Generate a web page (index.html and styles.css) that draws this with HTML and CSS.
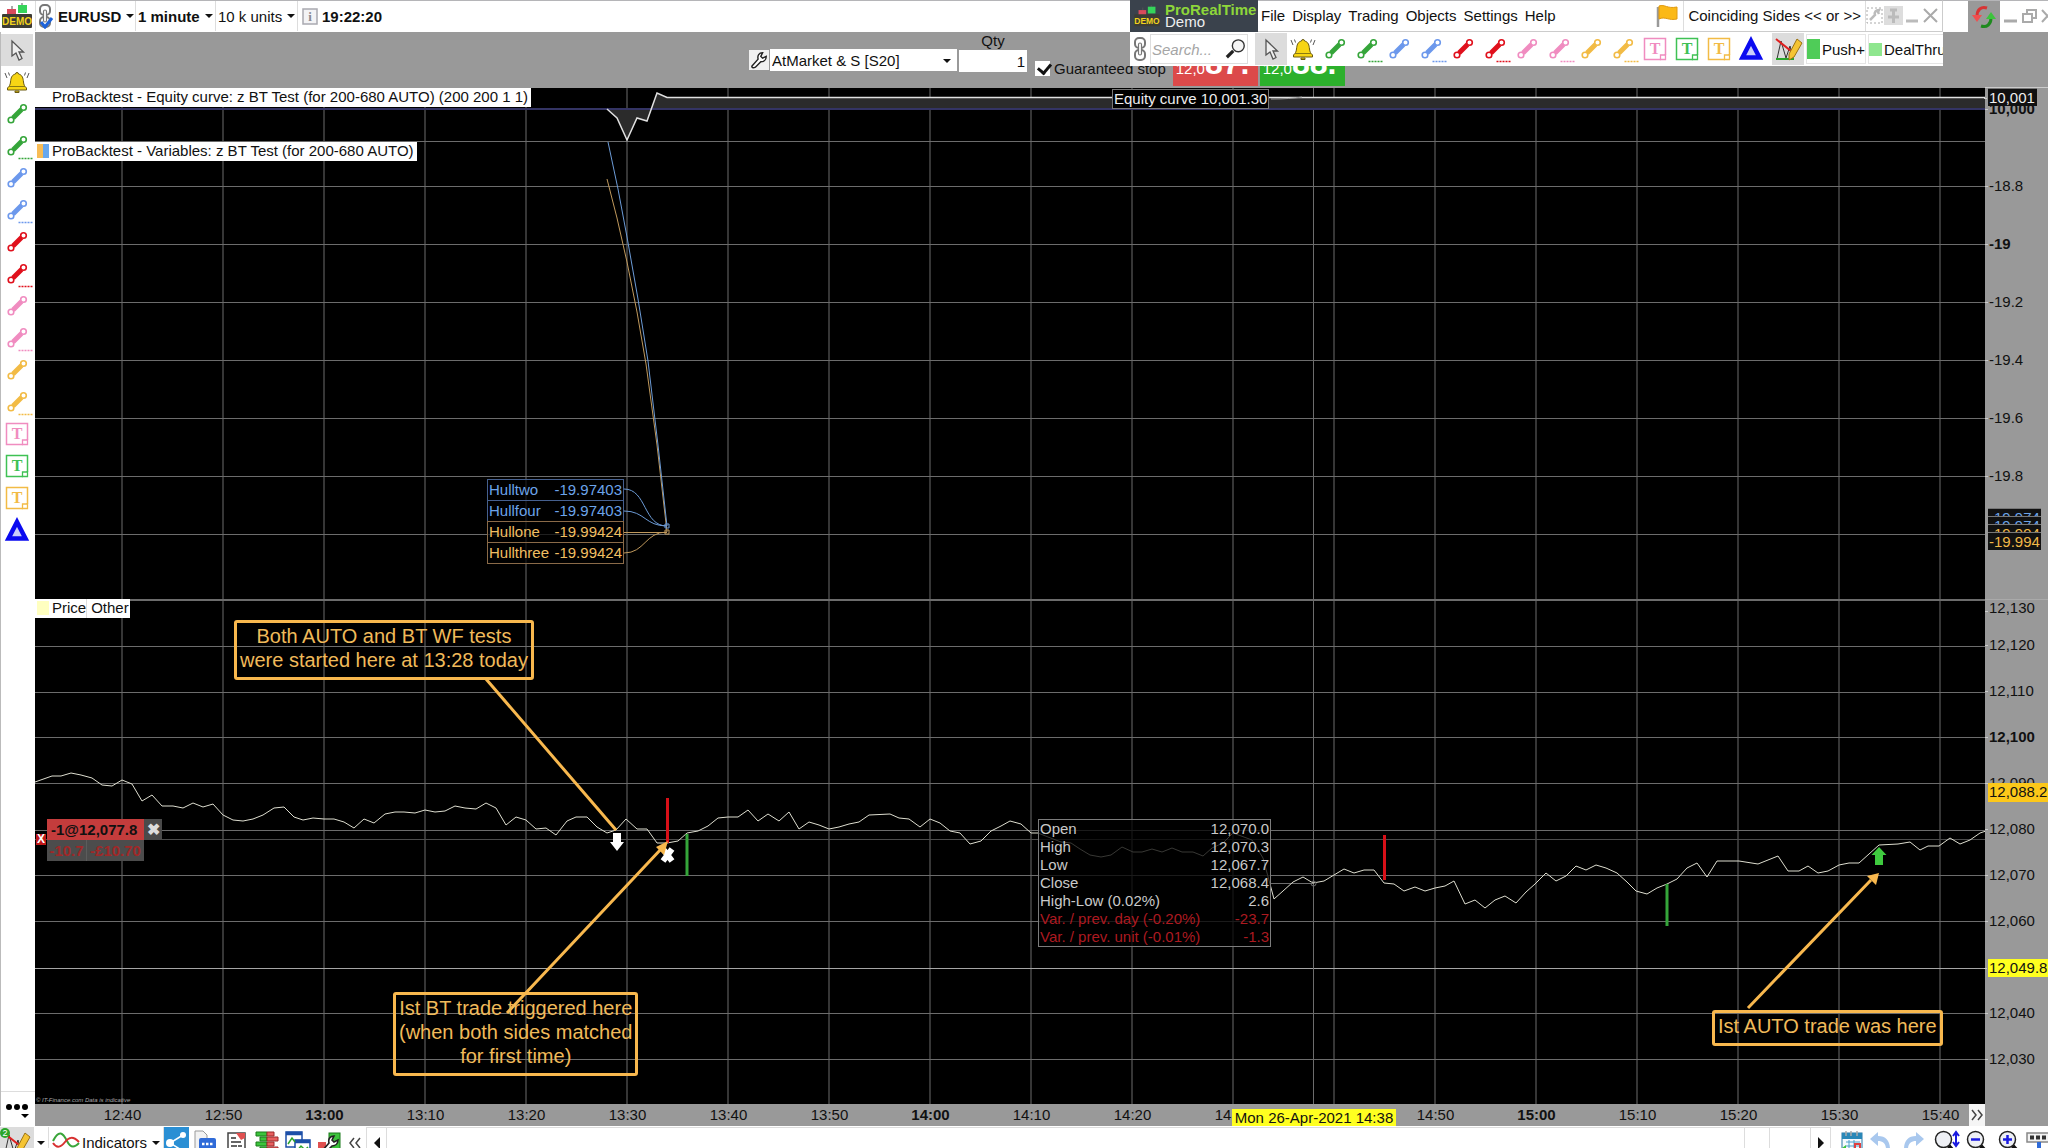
FILE: index.html
```html
<!DOCTYPE html>
<html lang="en">
<head>
    <meta charset="UTF-8">
    <meta name="viewport" content="width=device-width, initial-scale=1.0">
    <title>EURUSD - 1 minute</title>
    <link rel="stylesheet" href="styles.css">
</head>
<body>
    <!-- Icon sprite -->
    <svg class="sprite">
        <symbol id="i-demo" viewBox="0 0 30 26">
            <path d="M7 11v-5M10 3v4M20 0v3" stroke="#555" fill="none"/>
            <rect x="5" y="6" width="9" height="6" fill="#d84a5c"/>
            <rect x="16" y="2" width="9" height="8" fill="#35d45a"/>
            <rect x="0" y="11" width="30" height="14" rx="1" fill="#3c3c34"/>
            <text x="15" y="22" text-anchor="middle" class="demo-text">DEMO</text>
        </symbol>
        <symbol id="i-chain" viewBox="0 0 14 26">
            <g fill="none" stroke="#777" stroke-width="2">
                <rect x="2" y="2" width="10" height="10" rx="4"/>
                <rect x="2" y="14" width="10" height="10" rx="4"/>
            </g>
            <rect x="5.500" y="7" width="3" height="12" rx="1.500" fill="#fff" stroke="#777" stroke-width="1.200"/>
        </symbol>
        <symbol id="i-pointer" viewBox="0 0 32 32">
            <path d="M11 7v15l4-3 3 7 3-1.500-3-6.500h4.500z" fill="#eee" stroke="#555" stroke-width="1.300"/>
        </symbol>
        <symbol id="i-bell" viewBox="0 0 32 32">
            <path d="M14.500 8a1.500 1.500 0 0 1 3 0c4 1 4.500 4 5 8 .3 3 1 4 3 6v2h-19v-2c2-2 2.700-3 3-6 .5-4 1-7 5-8z" fill="#f7d514" stroke="#6a5a10"/>
            <path d="M8 20.500h16" stroke="#8a7a10"/>
            <path d="M14 25h4v1.500h-4z" fill="#f7d514" stroke="#6a5a10"/>
            <path d="M4 7l2 5M7.500 6.500l1 3M28 7l-2 5M24.500 6.500l-1 3" stroke="#555" fill="none"/>
        </symbol>
        <symbol id="i-line" viewBox="0 0 32 32">
            <path d="M12 20L20.500 11.500" stroke="currentColor" stroke-width="5"/>
            <circle cx="10" cy="22" r="2.800" fill="#fff" stroke="currentColor" stroke-width="1.600"/>
            <circle cx="22.500" cy="9.500" r="2.800" fill="#fff" stroke="currentColor" stroke-width="1.600"/>
        </symbol>
        <symbol id="i-line-dots" viewBox="0 0 32 32">
            <use href="#i-line"/>
            <path d="M17.500 28.500h14" stroke="currentColor" stroke-width="1.500" stroke-dasharray="2 1"/>
        </symbol>
        <symbol id="i-note" viewBox="0 0 32 32">
            <path d="M5.500 5.500h21v16l-5 5h-16z" fill="#fff" stroke="currentColor" stroke-width="1.500"/>
            <path d="M21.500 26.500v-4.500h5v4.500z" fill="#fff" stroke="currentColor" stroke-width="1.300"/>
            <text x="16" y="21" text-anchor="middle" class="note-text">T</text>
        </symbol>
        <symbol id="i-triangle" viewBox="0 0 32 32">
            <path d="M16 8L24.500 24.500H7.500z" fill="#c9cdfa" stroke="#0a0af0" stroke-width="4.500"/>
        </symbol>
        <symbol id="i-pencil" viewBox="0 0 32 32">
            <path d="M5 26l4-18 5 17 4-12 3 12" fill="none" stroke="#333"/>
            <path d="M4 6l15 12" stroke="#e02020" stroke-width="2"/>
            <path d="M4 26h18" stroke="#2aa52a" stroke-width="2"/>
            <path d="M25 6l5 4-8 14-5 3v-6z" fill="#f5c433" stroke="#9a7315"/>
        </symbol>
        <symbol id="i-wrench" viewBox="0 0 20 20">
            <path d="M2 17l7-8c-1-4 1-7 5-7l-2 4 2 2 4-2c0 4-3 6-6 6l-6 6c-2 1-4 1-4-1z" fill="#fff" stroke="#222" stroke-width="1.600"/>
        </symbol>
        <symbol id="i-search" viewBox="0 0 24 24">
            <path d="M2 21l7-7" stroke="#222" stroke-width="3.500"/>
            <circle cx="14.500" cy="8.500" r="6.500" fill="#f5f5f5" stroke="#333" stroke-width="1.500"/>
        </symbol>
        <symbol id="i-zoom" viewBox="0 0 24 26">
            <path d="M14 15l8 9" stroke="#111" stroke-width="4"/>
            <circle cx="9.500" cy="9.500" r="8" fill="#eef0f5" stroke="#222" stroke-width="1.500"/>
        </symbol>
    </svg>

    <header class="topbar">
        <div class="cell cell-demo"><svg width="30" height="26"><use href="#i-demo"/></svg></div>
        <div class="cell cell-chain">
            <svg width="16" height="26" viewBox="0 0 16 26"><use href="#i-chain" width="14" height="26"/><path d="M3 19l4 5 7-9" fill="none" stroke="#1d62d8" stroke-width="3"/></svg>
        </div>
        <button class="cell pick bold">EURUSD</button>
        <button class="cell pick bold">1 minute</button>
        <button class="cell pick pick-units">10 k units</button>
        <div class="cell clock">
            <svg width="16" height="17" viewBox="0 0 16 17"><rect x="1" y="1" width="14" height="15" fill="#f3f3f5" stroke="#a9a9b0" stroke-width="1.500"/><text x="8" y="13" text-anchor="middle" class="info-text">i</text></svg>
            <span class="bold">19:22:20</span>
        </div>
        <div class="window-buttons">
            <span class="refresh">
                <svg width="26" height="26" viewBox="0 0 26 26"><path d="M16 4c-6-2-10 2-10 8" fill="none" stroke="#d83434" stroke-width="3"/><path d="M1 11h10l-5 7z" fill="#f05050"/><path d="M10 22c6 2 10-2 10-8" fill="none" stroke="#1e8a1e" stroke-width="3"/><path d="M15 15h10l-5-7z" fill="#3cc43c"/></svg>
            </span>
            <svg width="48" height="20" viewBox="0 0 48 20"><g fill="none" stroke="#aaa" stroke-width="2"><path d="M4 15h13" stroke-width="3"/><path d="M27 8V4h9v8h-4M23 8h9v8h-9z"/><path d="M42 4l11 12M53 4l-11 12"/></g></svg>
        </div>
    </header>

    <div class="workspace">
        <aside class="tools">
            <button class="tool active" aria-label="Select"><svg><use href="#i-pointer"/></svg></button>
            <button class="tool" aria-label="Alert"><svg><use href="#i-bell"/></svg></button>
            <button class="tool green" aria-label="Segment"><svg><use href="#i-line"/></svg></button>
            <button class="tool green" aria-label="Dotted segment"><svg><use href="#i-line-dots"/></svg></button>
            <button class="tool blue" aria-label="Segment"><svg><use href="#i-line"/></svg></button>
            <button class="tool blue" aria-label="Dotted segment"><svg><use href="#i-line-dots"/></svg></button>
            <button class="tool red" aria-label="Segment"><svg><use href="#i-line"/></svg></button>
            <button class="tool red" aria-label="Dotted segment"><svg><use href="#i-line-dots"/></svg></button>
            <button class="tool pink" aria-label="Segment"><svg><use href="#i-line"/></svg></button>
            <button class="tool pink" aria-label="Dotted segment"><svg><use href="#i-line-dots"/></svg></button>
            <button class="tool orange" aria-label="Segment"><svg><use href="#i-line"/></svg></button>
            <button class="tool orange" aria-label="Dotted segment"><svg><use href="#i-line-dots"/></svg></button>
            <button class="tool pink" aria-label="Text"><svg><use href="#i-note"/></svg></button>
            <button class="tool lime" aria-label="Text"><svg><use href="#i-note"/></svg></button>
            <button class="tool orange" aria-label="Text"><svg><use href="#i-note"/></svg></button>
            <button class="tool" aria-label="Triangle"><svg><use href="#i-triangle"/></svg></button>
            <button class="more" aria-label="More tools">
                <svg width="28" height="20" viewBox="0 0 28 20"><circle cx="5" cy="5" r="3"/><circle cx="13" cy="5" r="3"/><circle cx="21" cy="5" r="3"/><path d="M17 12h8l-4 4z"/></svg>
            </button>
        </aside>

        <main class="main">
            <form class="order-bar">
                <button type="button" class="wrench" aria-label="Order settings"><svg width="18" height="18"><use href="#i-wrench"/></svg></button>
                <span class="order-type">
                    <select aria-label="Order type"><option>AtMarket &amp; S [S20]</option></select>
                </span>
                <div class="qty">
                    <label for="qty">Qty</label>
                    <input type="text" id="qty" value="1">
                </div>
                <div class="stop">
                    <input type="checkbox" id="stop" checked>
                    <label for="stop">Guaranteed stop</label>
                </div>
                <button type="button" class="quote sell">12,0<b>87.</b><sup>0</sup></button>
                <button type="button" class="quote buy">12,0<b>88.</b><sup>0</sup></button>
            </form>

            <div class="chart-row">
                <div class="chart">
                    <svg class="plot">
                        <defs>
                            <pattern id="columns" x="86" width="101" height="1016" patternUnits="userSpaceOnUse"><path d="M1 0v1016" stroke="#6c6c6c"/></pattern>
                        </defs>
                        <rect width="100%" height="100%" fill="url(#columns)"/>
                        <g transform="translate(-35 -88)">
                            <!-- Horizontal grid -->
                            <path class="grid" d="M35 141.500h4000M35 186.500h4000M35 244.500h4000M35 302.500h4000M35 360.500h4000M35 418.500h4000M35 476.500h4000M35 534.500h4000M35 646.500h4000M35 692.500h4000M35 737.500h4000M35 783.500h4000M35 830.500h4000M35 875.500h4000M35 921.500h4000M35 1013.500h4000M35 1059.500h4000"/>
                            <path class="split" d="M35 600h4000"/>
                            <path class="grid position-level" d="M35 839.500h4000"/>
                            <path class="day-low" d="M35 968.500h4000"/>
                            <path class="grid" d="M1313.500 88v1016M1270 883.500h44"/>

                            <!-- Equity curve -->
                            <path class="area" d="M607 109L617 118 627 140 637 118 647 121 657 93 667 97H4000V109z"/>
                            <path class="base" d="M35 109h4000"/>
                            <polyline class="equity" points="607,109 617,118 627,140 637,118 647,121 657,93 667,97.500 4000,97.500"/>
                            <path class="equity-tail" d="M1271 99Q1290 99 1302 97"/>

                            <!-- Hull values -->
                            <polyline class="hull-orange" points="607,179 617,218 627,262 637,312 646,364 657,445 667,532"/>
                            <polyline class="hull-blue" points="608,142 618,189 627,237 638,299 648,361 658,445 667,526"/>
                            <path class="hull-blue" d="M624 489C647 489 643 526 667 526M624 511C645 511 645 526 667 526"/>
                            <path class="hull-orange" d="M624 532.500H667M624 553C645 553 645 532 667 532"/>
                            <path class="hull-blue" d="M665 524h4v4h-4z"/>
                            <path class="hull-orange" d="M665 530h4v4h-4z"/>

                            <!-- Price -->
                            <polyline class="price" points="35,782 52,776 61,776 71,773 81,775 92,778 102,785 112,786 122,780 132,784 142,801 152,795 162,806 173,806 183,808 193,803 203,807 213,804 223,815 233,820 243,821 253,819 263,815 274,808 284,807 294,817 303,820 313,818 324,819 334,819 344,822 354,828 364,819 374,823 385,814 395,812 404,812 415,813 425,810 435,812 445,811 455,806 465,808 476,809 486,803 496,808 506,825 516,817 526,820 536,829 546,828 556,835 567,821 576,817 587,817 597,827 607,833 616,830 626,819 637,829 647,829 657,843 667,843 678,841 687,833 698,831 708,826 718,818 728,817 738,817 748,810 758,821 768,814 779,821 789,812 799,829 809,822 819,825 829,829 839,827 849,824 859,822 869,815 890,814 899,818 909,819 920,827 930,819 940,823 950,831 960,833 970,844 981,841 991,831 1001,826 1010,821 1021,824 1031,833 1038,833 1048,837 1061,842 1071,843 1080,849 1090,855 1101,857 1111,855 1122,847 1133,852 1142,852 1152,849 1162,852 1172,848 1182,852 1193,852 1203,856 1212,848 1223,843 1233,833 1252,840 1263,858 1274,899 1283,891 1293,882 1303,877 1313,883 1324,881 1334,875 1344,869 1354,873 1364,870 1374,870 1384,883 1394,884 1404,891 1415,887 1425,891 1435,888 1445,886 1454,881 1465,904 1475,900 1485,908 1495,900 1505,896 1516,903 1526,892 1535,884 1546,873 1556,881 1566,876 1576,866 1586,870 1596,865 1606,868 1617,873 1627,882 1636,891 1647,894 1657,888 1667,884 1677,879 1687,868 1697,863 1707,877 1717,861 1739,861 1758,864 1778,856 1788,871 1799,871 1808,866 1818,873 1828,871 1839,865 1849,863 1859,863 1879,845 1898,844 1910,842 1920,850 1928,846 1939,846 1950,838 1960,844 1970,840 1980,833 1986,831"/>
                            <circle class="grid" cx="1313.500" cy="883.500" r="2.500"/>

                            <!-- Trades -->
                            <path class="down-bar" d="M667.500 798v45M1384.500 835v45"/>
                            <path class="up-bar" d="M687 834v42M1667 884v42"/>
                            <path class="marker" d="M613 833h8v9h3l-7 9-7-9h3z"/>
                            <path class="marker-x" d="M663 849l9 12M672 849l-9 12"/>
                            <path class="marker-buy" d="M1875 865v-10h-3.500l7.500-8 7.500 8h-3.500v10z"/>

                            <!-- Arrows -->
                            <path class="arrow" d="M486 679L616 830M507 1013L662 848M1748 1008L1871 880"/>
                            <path class="head" d="M668 841l-4 14-8-8zM1879 873l-3 12-9-9z"/>
                        </g>
                    </svg>

                    <div class="title title-equity">ProBacktest - Equity curve: z BT Test (for 200-680 AUTO) (200 200 1 1)</div>
                    <div class="title title-variables"><i class="swatch swatch-two"></i>ProBacktest - Variables: z BT Test (for 200-680 AUTO)</div>
                    <div class="title title-price"><i class="swatch"></i>Price<span>Other</span></div>

                    <div class="equity-label">Equity curve 10,001.30</div>

                    <dl class="hull">
                        <div class="blue-label"><dt>Hulltwo</dt><dd>-19.97403</dd></div>
                        <div class="blue-label"><dt>Hullfour</dt><dd>-19.97403</dd></div>
                        <div><dt>Hullone</dt><dd>-19.99424</dd></div>
                        <div><dt>Hullthree</dt><dd>-19.99424</dd></div>
                    </dl>

                    <div class="note note-start">Both AUTO and BT WF tests<br>were started here at 13:28 today</div>
                    <div class="note note-bt">Ist BT trade triggered here<br>(when both sides matched<br>for first time)</div>
                    <div class="note note-auto">Ist AUTO trade was here</div>

                    <div class="position">
                        <div class="position-main"><span>-1@12,077.8</span><button aria-label="Close position">✖</button></div>
                        <div class="position-pl"><span>-10.7</span><span>-£10.70</span></div>
                    </div>
                    <div class="position-mark">X</div>

                    <table class="ohlc">
                        <tr><th>Open</th><td>12,070.0</td></tr>
                        <tr><th>High</th><td>12,070.3</td></tr>
                        <tr><th>Low</th><td>12,067.7</td></tr>
                        <tr><th>Close</th><td>12,068.4</td></tr>
                        <tr><th>High-Low (0.02%)</th><td>2.6</td></tr>
                        <tr class="loss"><th>Var. / prev. day (-0.20%)</th><td>-23.7</td></tr>
                        <tr class="loss"><th>Var. / prev. unit (-0.01%)</th><td>-1.3</td></tr>
                    </table>

                    <div class="copyright">© IT-Finance.com Data is indicative</div>
                </div>

                <div class="price-axis">
                    <div class="axis axis-equity">
                        <b>10,000</b>
                        <span class="badge badge-equity">10,001</span>
                    </div>
                    <div class="axis axis-variables">
                        <span>-18.8</span><b>-19</b><span>-19.2</span><span>-19.4</span><span>-19.6</span><span>-19.8</span>
                        <div class="badge-stack">
                            <span class="badge blue-label">-19.974</span>
                            <span class="badge blue-label">-19.974</span>
                            <span class="badge">-19.994</span>
                            <span class="badge">-19.994</span>
                        </div>
                    </div>
                    <div class="axis axis-price">
                        <span>12,130</span><span>12,120</span><span>12,110</span><b>12,100</b><span>12,090</span><span>12,080</span><span>12,070</span><span>12,060</span><span class="low">12,049.8</span><span>12,040</span><span>12,030</span>
                        <div class="last">12,088.2</div>
                    </div>
                </div>
            </div>

            <div class="time-axis">
                <span>12:40</span><span>12:50</span><b>13:00</b><span>13:10</span><span>13:20</span><span>13:30</span><span>13:40</span><span>13:50</span><b>14:00</b><span>14:10</span><span>14:20</span><span>14:30</span><span>14:40</span><span>14:50</span><b>15:00</b><span>15:10</span><span>15:20</span><span>15:30</span><span>15:40</span>
                <div class="cursor-date">Mon 26-Apr-2021 14:38</div>
                <button class="forward" aria-label="Latest"><svg width="12" height="12" viewBox="0 0 12 12"><path d="M1 1l4 5-4 5M7 1l4 5-4 5" fill="none" stroke="#444" stroke-width="1.500"/></svg></button>
            </div>
        </main>
    </div>

    <footer class="bottombar">
        <div class="bottom-inner">
            <button class="draw active" aria-label="Draw"><svg width="34" height="32" viewBox="0 0 34 32"><use href="#i-pencil" width="32" height="32"/><circle cx="5" cy="6" r="5" fill="#2aa52a"/><text x="5" y="9" text-anchor="middle" class="count-text">2</text></svg></button>
            <button class="drop" aria-label="Drawing options"></button>
            <button class="indicators"><svg width="28" height="24" viewBox="0 0 28 24"><path d="M1 10c6-12 10-8 14 0s8 6 12 2" fill="none" stroke="#3aa53a" stroke-width="2"/><path d="M1 12c4 6 8 4 12-1s8-6 14 0" fill="none" stroke="#d83030" stroke-width="2"/></svg>Indicators</button>
            <button class="drop" aria-label="Indicator options"></button>
            <button class="share" aria-label="Share"><svg width="22" height="26" viewBox="0 0 22 26"><path d="M17 5L4 13l13 8" fill="none" stroke="#fff" stroke-width="1.500"/><g fill="#fff"><circle cx="17" cy="5" r="3"/><circle cx="4" cy="13" r="4"/><circle cx="17" cy="21" r="3"/></g></svg></button>
            <button aria-label="Comments"><svg width="24" height="26" viewBox="0 0 24 26"><path d="M2 1h8l4 4v16H2z" fill="#f2f2f2" stroke="#999"/><rect x="6" y="8" width="17" height="12" rx="2" fill="#2f6bd8"/><path d="M9 14h2.500M13 14h2.500M17 14h2.500" stroke="#fff" stroke-width="2.500"/></svg></button>
            <button aria-label="Report"><svg width="24" height="26" viewBox="0 0 24 26"><rect x="4" y="3" width="17" height="20" fill="#fff" stroke="#444" stroke-width="1.500"/><path d="M12 3h9v5l-4 2z" fill="#e05050"/><path d="M7 8h5M7 12h10M7 16h6M14 16h4" stroke="#333" stroke-width="1.500"/></svg></button>
            <button aria-label="Order book"><svg width="24" height="26" viewBox="0 0 24 26"><path d="M1 2h11v4h-11zM5 7h7v4h-7zM1 12h11v4h-11zM5 17h7v4h-7z" fill="#3cc43c" stroke="#1a7a1a"/><path d="M12 2h7v4h-7zM12 7h11v4h-11zM12 12h7v4h-7zM12 17h11v4h-11z" fill="#e86060" stroke="#9a2a2a"/></svg></button>
            <button aria-label="Windows"><svg width="26" height="26" viewBox="0 0 26 26"><g fill="#fff" stroke="#1c4fa8" stroke-width="1.500"><rect x="1" y="2" width="16" height="15"/><rect x="10" y="10" width="15" height="15"/></g><path d="M1 3.500h16M10 11.500h15" stroke="#1c4fa8" stroke-width="3.500"/><path d="M3 14l4-6 3 4M12 21l4-5 4 4 3-3" fill="none" stroke="#2aa52a" stroke-width="1.500"/></svg></button>
            <button aria-label="Trading settings"><svg width="26" height="26" viewBox="0 0 26 26"><rect x="13" y="3" width="11" height="16" fill="#3cc43c" stroke="#1a7a1a"/><rect x="2" y="12" width="8" height="10" fill="#e05050"/><use href="#i-wrench" x="4" y="4" width="20" height="20"/></svg></button>
            <button class="collapse" aria-label="Collapse"><svg width="12" height="12" viewBox="0 0 12 12"><path d="M5 1L1 6l4 5M11 1L7 6l4 5" fill="none" stroke="#444" stroke-width="1.500"/></svg></button>
            <button class="scroll scroll-left" aria-label="Scroll left"></button>
            <div class="scroll-track"><i></i><i></i></div>
            <button class="scroll scroll-right" aria-label="Scroll right"></button>
            <button class="nav" aria-label="Calendar"><svg width="26" height="26" viewBox="0 0 26 26"><rect x="4" y="3" width="20" height="20" fill="#f5f9fd" stroke="#2a78a8"/><path d="M4 6h20" stroke="#2a88b8" stroke-width="6"/><path d="M8 1v5M13 1v5M19 1v5" stroke="#aaa" stroke-width="1.500"/><path d="M8 12h14M8 16h14M11 10v12M16 10v12" stroke="#4aa0cc"/><path d="M17 14h5v5h-5z" fill="none" stroke="#e04040" stroke-width="2"/><path d="M0 21l8-6v3h7v6H0z" fill="#3cc43c"/></svg></button>
            <button class="nav" aria-label="Undo"><svg width="22" height="26" viewBox="0 0 22 26"><path d="M0 9l8-7v4c8 0 12 5 12 13h-4c0-5-3-8-8-8v5z" fill="#a9c8ee"/></svg></button>
            <button class="nav" aria-label="Redo"><svg width="22" height="26" viewBox="0 0 22 26"><path d="M22 9l-8-7v4C6 6 2 11 2 19h4c0-5 3-8 8-8v5z" fill="#a9c8ee"/></svg></button>
            <button class="nav" aria-label="Zoom height"><svg width="26" height="26" viewBox="0 0 26 26"><use href="#i-zoom" width="24" height="26"/><path d="M22 3v12M19 6l3-4 3 4M19 12l3 4 3-4" fill="none" stroke="#1a1ae0" stroke-width="2"/></svg></button>
            <button class="nav" aria-label="Zoom out"><svg width="26" height="26" viewBox="0 0 26 26"><use href="#i-zoom" width="24" height="26"/><path d="M5 9.500h9" stroke="#1a1ae0" stroke-width="2.500"/></svg></button>
            <button class="nav" aria-label="Zoom in"><svg width="26" height="26" viewBox="0 0 26 26"><use href="#i-zoom" width="24" height="26"/><path d="M5 9.500h9M9.500 5v9" stroke="#1a1ae0" stroke-width="2.500"/></svg></button>
            <button class="nav" aria-label="Keyboard"><svg width="26" height="26" viewBox="0 0 26 26"><rect x="4" y="3" width="30" height="9" fill="#f2f2f2" stroke="#888" stroke-width="1.500"/><path d="M7 7.500h20" stroke="#333" stroke-width="4" stroke-dasharray="4 2"/><path d="M16 12v8" stroke="#2f6bd8" stroke-width="4"/></svg></button>
        </div>
    </footer>

    <!-- Floating platform window -->
    <section class="floating">
        <div class="float-top">
            <div class="brand">
                <svg width="28" height="22"><use href="#i-demo"/></svg>
                <div><b>ProRealTime</b><span>Demo</span></div>
            </div>
            <nav class="menu">
                <a href="#">File</a><a href="#">Display</a><a href="#">Trading</a><a href="#">Objects</a><a href="#">Settings</a><a href="#">Help</a>
            </nav>
            <svg class="flag" width="22" height="24" viewBox="0 0 22 24"><path d="M2 3v20" stroke="#999" stroke-width="2.500"/><path d="M3 2c6-2 8 3 18 1v12c-8 2-12-3-18 0z" fill="#fbb917" stroke="#e09a10"/></svg>
            <div class="layout-name">Coinciding Sides &lt;&lt; or &gt;&gt;</div>
            <svg width="76" height="24" viewBox="0 0 76 24">
                <rect x="1" y="4" width="15" height="15" fill="none" stroke="#aaa" stroke-dasharray="2 2"/>
                <path d="M4 16l5-5c-1-3 1-5 4-5l-1 2 1 2" fill="none" stroke="#bbb" stroke-width="2.500"/>
                <rect x="18" y="2" width="19" height="19" fill="#ddd"/>
                <path d="M24 6h7M27.500 5v14M22 13h11" stroke="#bbb" stroke-width="3"/>
                <path d="M40 17h12" stroke="#bbb" stroke-width="3"/>
                <path d="M58 5l13 13M71 5L58 18" stroke="#aaa" stroke-width="2"/>
            </svg>
        </div>
        <div class="float-tools">
            <svg width="20" height="26"><use href="#i-chain"/></svg>
            <label class="search"><input type="text" placeholder="Search..." aria-label="Search"><svg width="22" height="24"><use href="#i-search"/></svg></label>
            <button class="tool active" aria-label="Select"><svg><use href="#i-pointer"/></svg></button>
            <button class="tool" aria-label="Alert"><svg><use href="#i-bell"/></svg></button>
            <button class="tool green" aria-label="Segment"><svg><use href="#i-line"/></svg></button>
            <button class="tool green" aria-label="Dotted segment"><svg><use href="#i-line-dots"/></svg></button>
            <button class="tool blue" aria-label="Segment"><svg><use href="#i-line"/></svg></button>
            <button class="tool blue" aria-label="Dotted segment"><svg><use href="#i-line-dots"/></svg></button>
            <button class="tool red" aria-label="Segment"><svg><use href="#i-line"/></svg></button>
            <button class="tool red" aria-label="Dotted segment"><svg><use href="#i-line-dots"/></svg></button>
            <button class="tool pink" aria-label="Segment"><svg><use href="#i-line"/></svg></button>
            <button class="tool pink" aria-label="Dotted segment"><svg><use href="#i-line-dots"/></svg></button>
            <button class="tool orange" aria-label="Segment"><svg><use href="#i-line"/></svg></button>
            <button class="tool orange" aria-label="Dotted segment"><svg><use href="#i-line-dots"/></svg></button>
            <button class="tool pink" aria-label="Text"><svg><use href="#i-note"/></svg></button>
            <button class="tool lime" aria-label="Text"><svg><use href="#i-note"/></svg></button>
            <button class="tool orange" aria-label="Text"><svg><use href="#i-note"/></svg></button>
            <button class="tool" aria-label="Triangle"><svg><use href="#i-triangle"/></svg></button>
            <button class="tool active tool-draw" aria-label="Draw"><svg><use href="#i-pencil"/></svg></button>
            <button class="template"><i class="chip"></i>Push+</button>
            <button class="template template-deal"><i class="chip chip-light"></i>DealThru</button>
        </div>
    </section>
</body>
</html>
```
FILE: styles.css
```css
* {
    box-sizing: border-box;
}

body {
    font-family: "Liberation Sans", Arial, sans-serif;
    font-size: 15px;
    color: #111;
    background-color: #fff;
    display: flex;
    flex-direction: column;
    height: 100vh;
    margin: 0;
    overflow: hidden;
}

button, input, select {
    font: inherit;
    color: inherit;
    margin: 0;
    padding: 0;
    border: none;
    border-radius: 0;
    background: none;
}

svg {
    display: block;
    flex: none;
}

.sprite {
    position: absolute;
    width: 0;
    height: 0;
}

.demo-text {
    font-size: 10px;
    font-weight: bold;
    fill: #f2d31c;
}

.note-text {
    font-family: "Liberation Serif", serif;
    font-size: 16px;
    font-weight: bold;
    fill: currentColor;
}

.info-text {
    font-family: "Liberation Serif", serif;
    font-size: 13px;
    font-weight: bold;
    fill: #8a8a92;
}

.count-text {
    font-size: 9px;
    fill: #fff;
}

.bold {
    font-weight: bold;
}

/* Top bar */
.topbar {
    display: flex;
    flex: none;
    height: 32px;
    padding-bottom: 1px;
    border-top: 1px solid #b5b5b8;
}

.cell {
    display: flex;
    align-items: center;
    gap: 6px;
    border-right: 1px solid #ddd;
}

.cell-demo {
    width: 36px;
    padding-left: 2px;
}

.cell-chain {
    width: 20px;
    padding-left: 2px;
}

.pick {
    width: 80px;
    padding-left: 2px;
    gap: 5px;
    white-space: nowrap;
}

.pick-units {
    width: 82px;
}

.pick::after, .drop::after, .order-type::after {
    content: "";
    border: 4px solid transparent;
    border-top-color: #111;
    border-bottom: none;
}

.clock {
    padding-left: 4px;
    gap: 4px;
    border: none;
}

.window-buttons {
    display: flex;
    align-items: flex-start;
    margin-left: auto;
}

.window-buttons > svg {
    margin-top: 5px;
}

.refresh {
    display: flex;
    align-items: center;
    justify-content: center;
    width: 32px;
    height: 31px;
    background-color: #999;
}

/* Left tools */
.workspace {
    display: flex;
    flex: 1;
    min-height: 0;
}

.tools {
    display: flex;
    flex-direction: column;
    align-items: flex-start;
    flex: none;
    width: 35px;
    padding-top: 2px;
    border-left: 1px solid #bbb;
    background-color: #fff;
}

.tool {
    width: 32px;
    height: 32px;
    flex: none;
}

.tool svg {
    width: 32px;
    height: 32px;
}

.active {
    background-color: #dcdcdc;
}

.green { color: #35a53a; }
.blue { color: #6c98ec; }
.red { color: #e0101c; }
.pink { color: #f08cc0; }
.orange { color: #f2bb45; }
.lime { color: #3fc154; }

.more {
    display: flex;
    align-items: center;
    justify-content: center;
    width: 100%;
    height: 35px;
    margin-top: auto;
    padding-top: 6px;
    border-top: 1px solid #ddd;
}

.main {
    display: flex;
    flex-direction: column;
    flex: 1;
    min-width: 0;
    background-color: #999;
}

/* Order bar */
.order-bar {
    display: flex;
    align-items: flex-start;
    flex: none;
    height: 56px;
    padding-left: 714px;
}

.wrench {
    display: flex;
    align-items: center;
    justify-content: center;
    width: 20px;
    height: 20px;
    margin-top: 18px;
    background-color: #f0f0f0;
}

.order-type {
    position: relative;
    margin: 17px 2px 0 1px;
}

.order-type select {
    appearance: none;
    width: 187px;
    height: 22px;
    padding-left: 2px;
    background-color: #fff;
}

.order-type::after {
    position: absolute;
    right: 6px;
    top: 10px;
}

.qty {
    display: flex;
    flex-direction: column;
    align-items: center;
    width: 68px;
    line-height: 18px;
}

.qty input {
    width: 68px;
    height: 22px;
    padding-right: 2px;
    text-align: right;
    background-color: #fff;
}

.stop {
    display: flex;
    align-items: center;
    gap: 4px;
    margin: 28px 7px 0 8px;
    white-space: nowrap;
}

.stop input {
    appearance: none;
    width: 15px;
    height: 15px;
    background-color: #fff;
}

.stop input:checked::after {
    content: "";
    display: block;
    width: 6px;
    height: 10px;
    margin-left: 5px;
    border: solid #111;
    border-width: 0 3px 3px 0;
    transform: rotate(40deg);
}

.quote {
    width: 85px;
    height: 34px;
    margin: 20px 2px 0 0;
    line-height: 34px;
    text-align: left;
    padding-left: 3px;
    color: #fff;
    white-space: nowrap;
}

.quote b {
    font-size: 32px;
    line-height: 0;
}

.quote sup {
    font-size: 15px;
    line-height: 0;
    vertical-align: 12px;
}

.sell {
    background-color: #dc4a4a;
}

.buy {
    background-color: #2cb02c;
}

/* Chart */
.chart-row {
    display: flex;
    flex: 1;
    min-height: 0;
}

.chart {
    position: relative;
    flex: 1;
    min-width: 0;
    background-color: #000;
    overflow: hidden;
}

.plot {
    width: 100%;
    height: 100%;
}

.plot path, .plot polyline, .plot circle {
    fill: none;
}

.plot .grid { stroke: #6c6c6c; }
.plot .split { stroke: #6c6c6c; stroke-width: 2; }
.plot .position-level { stroke: #4c4c4c; }
.plot .day-low { stroke: #a5a5a5; }
.plot .area { fill: #2b2b2b; }
.plot .base { stroke: #343464; stroke-width: 2; }
.plot .equity { stroke: #e0e0e0; stroke-width: 1.500; }
.plot .equity-tail { stroke: #999; }
.plot .hull-blue { stroke: #6c9bd6; }
.plot .hull-orange { stroke: #c0995c; }
.plot .price { stroke: #deded0; }
.plot .down-bar { stroke: #d81018; stroke-width: 3; }
.plot .up-bar { stroke: #35a53a; stroke-width: 3; }
.plot .marker { fill: #fff; }
.plot .marker-x { stroke: #fff; stroke-width: 6; }
.plot .marker-buy { fill: #3fcb3f; }
.plot .arrow { stroke: #f8b84e; stroke-width: 3; }
.plot .head { fill: #f8b84e; }

.title {
    position: absolute;
    left: 0;
    display: flex;
    height: 19px;
    line-height: 18px;
    padding: 0 3px 0 17px;
    background-color: #fff;
    white-space: nowrap;
}

.title-equity {
    top: 0;
}

.title-variables {
    top: 54px;
    padding-left: 2px;
}

.title-price {
    top: 511px;
    padding: 0 0 0 2px;
}

.title-price span {
    padding: 0 1px 0 4px;
    border-left: 1px solid #ddd;
}

.swatch {
    width: 12px;
    height: 14px;
    margin: 2px 3px 0 0;
    background-color: #ffffc0;
}

.swatch-two {
    background: linear-gradient(90deg, #f8bc55 50%, #68a8ee 50%);
}

.equity-label {
    position: absolute;
    left: 1077px;
    top: 1px;
    height: 20px;
    line-height: 18px;
    padding: 0 1px;
    border: 1px solid #777;
    background-color: #000;
    color: #eee;
}

.hull {
    position: absolute;
    left: 452px;
    top: 391px;
    width: 137px;
    margin: 0;
    color: #f0be62;
}

.hull div {
    display: flex;
    justify-content: space-between;
    height: 22px;
    margin-bottom: -1px;
    padding: 0 1px;
    line-height: 20px;
    border: 1px solid #8a6a48;
    background-color: rgba(0, 0, 0, 0.7);
}

.hull dd {
    margin: 0;
}

.blue-label {
    color: #6ca4ea;
}

.hull .blue-label {
    border-color: #46608e;
}

.note {
    position: absolute;
    padding: 1px 3px 5px;
    border: 3px solid #f8b84e;
    border-radius: 3px;
    font-size: 20px;
    line-height: 24px;
    text-align: center;
    white-space: nowrap;
    color: #f0ba5a;
}

.note-start {
    left: 199px;
    top: 532px;
}

.note-bt {
    left: 358px;
    top: 904px;
}

.note-auto {
    left: 1677px;
    top: 922px;
}

.position {
    position: absolute;
    left: 12px;
    top: 731px;
    font-weight: bold;
}

.position-main, .position-pl {
    display: flex;
    line-height: 21px;
}

.position-main span {
    width: 97px;
    padding-left: 4px;
    background-color: #c43c3c;
}

.position-main button {
    width: 18px;
    font-size: 16px;
    color: #ddd;
    background-color: #4a4a4a;
}

.position-pl {
    width: 97px;
    background-color: #4c4c4c;
    color: #a02828;
}

.position-pl span {
    flex: 1;
    text-align: center;
    white-space: nowrap;
}

.position-pl span:first-child {
    flex: none;
    width: 40px;
    border-right: 1px solid #5c5c5c;
}

.position-mark {
    position: absolute;
    left: 1px;
    top: 746px;
    width: 10px;
    font-size: 12px;
    font-weight: bold;
    line-height: 11px;
    text-align: center;
    color: #fff;
    background-color: #c01818;
}

.ohlc {
    position: absolute;
    left: 1003px;
    top: 731px;
    width: 233px;
    border: 1px solid #7c7c7c;
    border-spacing: 0;
    background-color: rgba(0, 0, 0, 0.75);
    color: #c9c9c9;
}

.ohlc th, .ohlc td {
    height: 18px;
    padding: 0 1px;
    font-weight: normal;
    line-height: 18px;
    text-align: left;
}

.ohlc td {
    text-align: right;
}

.ohlc .loss {
    color: #ac1a20;
}

.copyright {
    position: absolute;
    left: 1px;
    bottom: 0;
    font-size: 6px;
    line-height: 7px;
    font-style: italic;
    color: #aaa;
}

/* Price axis */
.price-axis {
    display: flex;
    flex-direction: column;
    flex: none;
    width: 63px;
    box-shadow: 0 -1px #ccc;
}

.axis {
    position: relative;
    display: flex;
    flex-direction: column;
    padding-left: 4px;
}

.axis > span, .axis > b {
    position: relative;
    flex: none;
    white-space: nowrap;
}

.axis > span::before, .axis > b::before {
    content: "";
    position: absolute;
    left: -4px;
    top: 50%;
    width: 3px;
    border-top: 1px solid #ccc;
}

.axis-equity {
    height: 53px;
}

.axis-equity > b {
    line-height: 42px;
}

.badge {
    display: block;
    position: relative;
    width: 53px;
    height: 18px;
    padding-left: 1px;
    line-height: 17px;
    border-top: 1px solid #777;
    background-color: #111;
    color: #f0b848;
}

.badge.blue-label {
    color: #6ca4ea;
}

.axis > .badge-equity {
    position: absolute;
    left: 3px;
    top: 0;
    width: 49px;
    color: #eee;
}

.badge-stack {
    position: absolute;
    left: 3px;
    top: 367px;
}

.badge + .badge {
    margin-top: -10px;
}

.axis-variables {
    height: 458px;
    padding-top: 16px;
    line-height: 58px;
}

.axis-price {
    flex: 1;
    line-height: 46px;
    border-top: 1px solid #aaa;
}

.axis-price > span:first-child {
    height: 22px;
    line-height: 16px;
}

.axis > .low {
    height: 18px;
    margin: 15px 0 13px -1px;
    padding-left: 1px;
    line-height: 18px;
    background-color: #ffff20;
}

.last {
    position: absolute;
    left: 3px;
    right: 0;
    top: 183px;
    height: 19px;
    padding-left: 1px;
    line-height: 18px;
    background-color: #fcc81a;
}

/* Time axis */
.time-axis {
    position: relative;
    display: flex;
    flex: none;
    height: 22px;
    padding-left: 37px;
    line-height: 22px;
    text-align: center;
}

.time-axis > span, .time-axis > b {
    flex: 0 0 101px;
}

.cursor-date {
    position: absolute;
    left: 1197px;
    top: 5px;
    width: 164px;
    height: 17px;
    line-height: 18px;
    background-color: #ffff20;
    white-space: nowrap;
}

.forward {
    position: absolute;
    right: 63px;
    top: 0;
    display: flex;
    align-items: center;
    justify-content: center;
    width: 16px;
    height: 22px;
    background-color: #f5f5f5;
}

/* Bottom bar */
.bottombar {
    flex: none;
    height: 22px;
    overflow: hidden;
}

.bottom-inner {
    display: flex;
    align-items: stretch;
    height: 32px;
    padding-top: 1px;
}

.bottom-inner > button {
    display: flex;
    align-items: center;
    justify-content: center;
    flex: none;
    width: 31px;
}

.bottom-inner > .draw {
    width: 34px;
}

.bottom-inner > .drop {
    width: 15px;
    border-right: 1px solid #ddd;
}

.bottom-inner > .indicators {
    width: 100px;
    padding-left: 1px;
    gap: 2px;
}

.bottom-inner > .share {
    width: 25px;
    background-color: #2a8fd4;
}

.bottom-inner > .collapse {
    width: 22px;
}

.bottom-inner > .scroll {
    width: 21px;
    border: 1px solid #ddd;
}

.scroll::after {
    content: "";
    border: 6px solid transparent;
}

.scroll-left::after {
    border-right-color: #111;
    border-left: none;
}

.scroll-right::after {
    border-left-color: #111;
    border-right: none;
}

.scroll-track {
    display: flex;
    justify-content: flex-end;
    flex: 1;
    padding-right: 40px;
    border-top: 1px solid #ddd;
}

.scroll-track i {
    width: 25px;
    border-left: 1px solid #ddd;
}

.scroll-track i + i {
    width: 1px;
}

.bottom-inner > .nav {
    width: 32px;
    justify-content: flex-start;
    padding-left: 7px;
}

.bottom-inner > .nav:last-child {
    width: 25px;
    padding: 0;
}

/* Floating window */
.floating {
    position: absolute;
    left: 1130px;
    top: 0;
    width: 813px;
    height: 66px;
    background-color: #fff;
    overflow: hidden;
}

.float-top {
    display: flex;
    align-items: center;
    height: 32px;
    padding-bottom: 1px;
    border-top: 1px solid #b5b5b8;
    border-bottom: 1px solid #ccc;
    border-right: 1px solid #ccc;
}

.brand {
    display: flex;
    align-items: center;
    gap: 4px;
    width: 128px;
    height: 32px;
    padding: 1px 0 0 3px;
    color: #eee;
    line-height: 12px;
    background-color: #3a424c;
}

.brand b {
    display: block;
    color: #8ed63a;
}

.menu {
    display: flex;
    gap: 7px;
    padding-left: 3px;
}

.menu a {
    color: inherit;
    text-decoration: none;
}

.flag {
    margin-left: auto;
}

.layout-name {
    margin: 0 0 0 5px;
    padding: 0 4px;
    line-height: 30px;
    border: solid #ddd;
    border-width: 0 1px;
}

.float-tools {
    display: flex;
    align-items: center;
    height: 34px;
}

.search {
    display: flex;
    align-items: center;
    width: 98px;
    height: 30px;
    margin-right: 7px;
    border: 1px solid #ddd;
}

.search input {
    flex: 1;
    min-width: 0;
    padding-left: 1px;
    outline: none;
}

.search input::placeholder {
    font-style: italic;
    color: #a5a5a5;
}

.tool-draw {
    margin-left: 5px;
}

.template {
    display: flex;
    align-items: center;
    gap: 2px;
    flex: none;
    height: 30px;
    margin-left: 2px;
    border: 1px solid #e5e5e5;
    white-space: nowrap;
}

.chip {
    width: 13px;
    height: 20px;
    background-color: #4fcc58;
}

.chip-light {
    height: 13px;
    background-color: #8ee68e;
}
```
